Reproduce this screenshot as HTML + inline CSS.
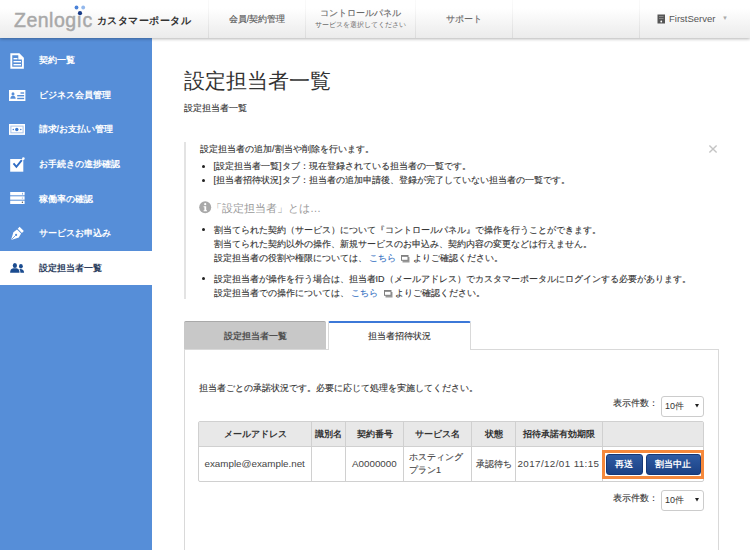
<!DOCTYPE html>
<html><head><meta charset="utf-8">
<style>
*{box-sizing:border-box}
html,body{margin:0;padding:0}
body{width:750px;height:550px;overflow:hidden;position:relative;background:#fff;font-family:"Liberation Sans",sans-serif;color:#333}
.a{position:absolute;white-space:nowrap}
.t[style*="bold"]{-webkit-text-stroke-width:0}
.t{position:absolute;white-space:nowrap;font-size:9px;line-height:14px;-webkit-text-stroke-width:0.12px}
#hdr{position:absolute;left:0;top:0;width:750px;height:38px;background:linear-gradient(#fff 0,#fff 22%,#ebebeb 100%);box-shadow:0 1px 3px rgba(0,0,0,.3);z-index:3}
.sep{position:absolute;top:0;width:1px;height:38px;background:linear-gradient(rgba(0,0,0,.02),rgba(0,0,0,.07))}
#side{position:absolute;left:0;top:38px;width:152px;height:512px;background:#568ed8;z-index:1}
.mi{position:absolute;left:0;width:152px;height:34.7px}
.mi .tx{position:absolute;left:38.6px;top:10.35px;line-height:14px;font-size:9px;font-weight:bold;color:#fff;white-space:nowrap}
.mi svg{position:absolute}
.act{background:#fff}
.act .tx{color:#2d3e5e}
</style></head><body>

<div id="hdr">
  <div class="a" style="left:14px;top:6.8px;font-size:19.5px;line-height:26px;color:#a8a8a8;letter-spacing:0.5px;-webkit-text-stroke:0.45px #a8a8a8">Zenlogıc</div>
  <svg class="a" style="left:0;top:0" width="100" height="38">
    <circle cx="76.5" cy="7.5" r="1.9" fill="#4a82d8"/>
    <circle cx="83.2" cy="7.5" r="1.9" fill="#93b8ec"/>
    <circle cx="80" cy="13.2" r="2.1" fill="#173a86"/>
  </svg>
  <div class="a" style="left:97px;top:12.7px;font-size:10px;letter-spacing:0.45px;line-height:15px;font-weight:bold;color:#333">カスタマーポータル</div>

  <div class="sep" style="left:208px"></div>
  <div class="sep" style="left:305px"></div>
  <div class="sep" style="left:415px"></div>
  <div class="sep" style="left:512px"></div>
  <div class="sep" style="left:639px"></div>

  <div class="t" style="left:209px;width:96px;text-align:center;top:11.5px;color:#555">会員/契約管理</div>
  <div class="t" style="left:306px;width:109px;text-align:center;top:6px;color:#666">コントロールパネル</div>
  <div class="a" style="left:306px;width:109px;text-align:center;top:20px;font-size:7.15px;line-height:10px;color:#666">サービスを選択してください</div>
  <div class="t" style="left:416px;width:96px;text-align:center;top:11.5px;color:#666">サポート</div>

  <svg class="a" style="left:657px;top:14px" width="9" height="10" viewBox="0 0 9 10">
    <rect x="0.5" y="0.5" width="7.5" height="9" fill="#555"/>
    <rect x="2" y="2" width="4.5" height="1" fill="#888"/>
    <rect x="2" y="4" width="4.5" height="1" fill="#888"/>
    <circle cx="4.25" cy="7.5" r="0.9" fill="#fff"/>
  </svg>
  <div class="a" style="left:669px;top:12px;font-size:9.5px;line-height:14px;color:#555">FirstServer</div>
  <div class="a" style="left:722px;top:13px;font-size:6px;line-height:10px;color:#aaa">▼</div>
</div>

<div id="side">
  <div class="mi" style="top:4.60px">
    <svg style="left:10px;top:10.40px" width="15" height="16" viewBox="0 0 15 16">
      <path d="M1.3 1.3 H9 L12.9 5.2 V14.7 H1.3 Z" fill="none" stroke="#fff" stroke-width="1.9"/>
      <path d="M8.3 0.4 L13.8 5.9 L13.8 6.5 L8.3 6.5 Z" fill="#fff"/>
      <rect x="3.5" y="5" width="4" height="1.4" fill="#fff"/>
      <rect x="3.5" y="8" width="7.5" height="1.4" fill="#fff"/>
      <rect x="3.5" y="11" width="7.5" height="1.4" fill="#fff"/>
    </svg>
    <div class="tx">契約一覧</div>
  </div>
  <div class="mi" style="top:39.30px">
    <svg style="left:8.8px;top:12.70px" width="17" height="12" viewBox="0 0 17 12">
      <rect x="0" y="0" width="16.4" height="11" fill="#fff"/>
      <ellipse cx="4" cy="3.9" rx="1.5" ry="1.7" fill="#568ed8"/>
      <path d="M1.3 8.8 Q1.5 5.8 4 5.8 Q6.5 5.8 6.7 8.8 Z" fill="#568ed8"/>
      <rect x="11.5" y="2.3" width="3.6" height="1.4" fill="#568ed8"/>
      <rect x="8.2" y="5" width="6.9" height="1.4" fill="#568ed8"/>
      <rect x="8.2" y="7.8" width="6.9" height="1.4" fill="#568ed8"/>
    </svg>
    <div class="tx">ビジネス会員管理</div>
  </div>
  <div class="mi" style="top:74.00px">
    <svg style="left:9px;top:12.00px" width="17" height="12" viewBox="0 0 17 12">
      <rect x="0" y="0" width="16" height="10.9" fill="#fff"/>
      <rect x="1.4" y="1.6" width="13.2" height="7.7" fill="#a9c4ec"/>
      <rect x="2.4" y="2.6" width="11.2" height="5.7" fill="#fff"/>
      <circle cx="7.8" cy="5.5" r="1.7" fill="#3f7bd0"/>
      <circle cx="4.3" cy="5.5" r="0.7" fill="#3f7bd0"/>
      <circle cx="11.8" cy="5.5" r="0.7" fill="#3f7bd0"/>
    </svg>
    <div class="tx">請求/お支払い管理</div>
  </div>
  <div class="mi" style="top:108.70px">
    <svg style="left:10px;top:10.30px" width="16" height="16" viewBox="0 0 16 16">
      <rect x="0.2" y="2" width="13.1" height="12.7" fill="#fff"/>
      <path d="M3.5 6.4 L6.4 9.8 L11.8 3.2" fill="none" stroke="#2f6cc4" stroke-width="1.9"/>
      <circle cx="13.4" cy="1.6" r="1.3" fill="#fff"/>
    </svg>
    <div class="tx">お手続きの進捗確認</div>
  </div>
  <div class="mi" style="top:143.40px">
    <svg style="left:10px;top:10.60px" width="15" height="13" viewBox="0 0 15 13">
      <rect x="0.2" y="0" width="14.4" height="3.3" fill="#fff"/>
      <rect x="0.2" y="4.3" width="14.4" height="3.4" fill="#fff"/>
      <rect x="0.2" y="8.7" width="14.4" height="3.3" fill="#fff"/>
      <rect x="12" y="0.8" width="0.9" height="1.8" fill="#7fa6e0"/>
      <circle cx="12.4" cy="6" r="0.6" fill="#7fa6e0"/>
      <circle cx="12.4" cy="10.3" r="0.7" fill="#555"/>
    </svg>
    <div class="tx">稼働率の確認</div>
  </div>
  <div class="mi" style="top:178.10px">
    <svg style="left:10px;top:9.90px" width="15" height="15" viewBox="0 0 15 15">
      <path d="M9.6 0.8 L13.8 5 L11.9 6.9 L7.7 2.7 Z" fill="#fff"/>
      <path d="M7 3.5 L11.1 7.6 L8.8 11.6 L1 14 L3.4 6.2 Z" fill="#fff"/>
      <path d="M1.3 13.7 L5.5 9.5" stroke="#568ed8" stroke-width="0.8"/>
      <circle cx="6.1" cy="8.9" r="1.1" fill="#568ed8"/>
    </svg>
    <div class="tx">サービスお申込み</div>
  </div>
  <div class="mi act" style="top:212.80px">
    <svg style="left:9px;top:10.20px" width="17" height="13" viewBox="0 0 17 13">
      <ellipse cx="5.9" cy="4.4" rx="2.1" ry="2.5" fill="#1a4b8f"/>
      <path d="M1.1 11.7 Q1.1 7.6 4.3 7.2 L7.5 7.2 Q10.5 7.6 10.5 11.7 Z" fill="#1a4b8f"/>
      <ellipse cx="11.9" cy="5.3" rx="1.9" ry="2.2" fill="#1a4b8f"/>
      <path d="M11.2 8 Q14.9 8 15.1 11.7 L11.4 11.7 Q11.4 9.3 10.4 8.3 Z" fill="#1a4b8f"/>
    </svg>
    <div class="tx">設定担当者一覧</div>
  </div>
</div>

<!-- content -->
<div class="a" style="left:184px;top:67px;font-size:20.8px;line-height:27px;color:#333">設定担当者一覧</div>
<div class="t" style="left:184px;top:100.5px;color:#333">設定担当者一覧</div>

<div class="a" style="left:184px;top:142px;width:2px;height:157px;background:#e3e3e3"></div>
<svg class="a" style="left:708px;top:144px" width="10" height="10" viewBox="0 0 10 10"><path d="M1.4 1.4 L8.6 8.4 M8.6 1.4 L1.4 8.4" stroke="#c4c4c4" stroke-width="1.4"/></svg>

<div class="t" style="left:200px;top:142px;color:#333">設定担当者の追加/割当や削除を行います。</div>
<div class="a" style="left:201.8px;top:164.9px;width:3px;height:3px;border-radius:50%;background:#222"></div>
<div class="t" style="left:213.5px;top:159px;color:#333">[設定担当者一覧]タブ：現在登録されている担当者の一覧です。</div>
<div class="a" style="left:201.8px;top:178.5px;width:3px;height:3px;border-radius:50%;background:#222"></div>
<div class="t" style="left:213.5px;top:173px;color:#333">[担当者招待状況]タブ：担当者の追加申請後、登録が完了していない担当者の一覧です。</div>

<svg class="a" style="left:199px;top:201px" width="13" height="13" viewBox="0 0 13 13">
  <circle cx="6.2" cy="6.2" r="6" fill="#a8a8a8"/>
  <circle cx="6.2" cy="3.2" r="1.1" fill="#fff"/>
  <path d="M4.6 5.3 H7.2 V9.3 H8 V10.3 H4.6 V9.3 H5.4 V6.3 H4.6 Z" fill="#fff"/>
</svg>
<div class="a" style="left:211px;top:200px;font-size:11px;line-height:16px;color:#9a9a9a">「設定担当者」とは…</div>

<div class="a" style="left:202px;top:228.1px;width:3px;height:3px;border-radius:50%;background:#222"></div>
<div class="t" style="left:213.5px;top:223px;color:#333">割当てられた契約（サービス）について『コントロールパネル』で操作を行うことができます。</div>
<div class="t" style="left:213.5px;top:237px;color:#333">割当てられた契約以外の操作、新規サービスのお申込み、契約内容の変更などは行えません。</div>
<div class="t" style="left:213.5px;top:251px;color:#333">設定担当者の役割や権限については、 <span style="color:#3a74c4">こちら</span></div>
<div class="t" style="left:412.5px;top:251px;color:#333">よりご確認ください。</div>
<svg class="a" style="left:401px;top:255px" width="9" height="8" viewBox="0 0 9 8"><rect x="1.5" y="2" width="7" height="5.5" fill="#999"/><rect x="0.5" y="0.5" width="6.5" height="4.8" fill="#fff" stroke="#808080" stroke-width="1"/><rect x="0.5" y="0.5" width="6.5" height="1.3" fill="#808080"/></svg>

<div class="a" style="left:202px;top:276.6px;width:3px;height:3px;border-radius:50%;background:#222"></div>
<div class="t" style="left:213.5px;top:272px;color:#333">設定担当者が操作を行う場合は、担当者ID（メールアドレス）でカスタマーポータルにログインする必要があります。</div>
<div class="t" style="left:213.5px;top:286px;color:#333">設定担当者での操作については、 <span style="color:#3a74c4">こちら</span></div>
<div class="t" style="left:394.5px;top:286px;color:#333">よりご確認ください。</div>
<svg class="a" style="left:383.5px;top:290px" width="9" height="8" viewBox="0 0 9 8"><rect x="1.5" y="2" width="7" height="5.5" fill="#999"/><rect x="0.5" y="0.5" width="6.5" height="4.8" fill="#fff" stroke="#808080" stroke-width="1"/><rect x="0.5" y="0.5" width="6.5" height="1.3" fill="#808080"/></svg>

<!-- tabs -->
<div class="a" style="left:184px;top:321px;width:142px;height:29px;background:#c8c8c8;border-top:1.5px solid #a9a9a9;border-radius:2px 2px 0 0"></div>
<div class="t" style="left:184px;width:142px;text-align:center;top:329px;color:#505050;font-weight:bold;-webkit-text-stroke-width:0">設定担当者一覧</div>
<div class="a" style="left:328px;top:321px;width:143px;height:29px;background:#fff;border:1px solid #d9d9d9;border-top:2px solid #3c78d8;border-bottom:none;border-radius:2px 2px 0 0;z-index:2"></div>
<div class="t" style="left:328px;width:143px;text-align:center;top:329px;color:#333;z-index:3">担当者招待状況</div>
<!-- panel -->
<div class="a" style="left:184px;top:349px;width:535px;height:220px;border:1px solid #d9d9d9;background:#fff"></div>

<div class="t" style="left:198.5px;top:381px;color:#333">担当者ごとの承諾状況です。必要に応じて処理を実施してください。</div>

<div class="t" style="left:612.5px;top:396px;color:#333">表示件数：</div>
<div class="a" style="left:661px;top:395.5px;width:42.5px;height:21.5px;border:1px solid #ccc;border-radius:3px;background:#fff"></div>
<div class="a" style="left:665px;top:398.5px;font-size:9px;line-height:14px;color:#333">10件</div>
<svg class="a" style="left:695px;top:404px" width="4" height="4" viewBox="0 0 4 4"><path d="M0 0 H4 L2 3.6 Z" fill="#222"/></svg>

<!-- table -->
<div class="a" style="left:198px;top:421px;width:506px;height:61px;border:1px solid #d0d0d0;border-radius:2px;background:#fff"></div>
<div class="a" style="left:199px;top:422px;width:504px;height:24px;background:#e8e8e8"></div>
<div class="a" style="left:199px;top:446px;width:504px;height:1px;background:#d0d0d0"></div>
<div class="a" style="left:311px;top:422px;width:1px;height:59px;background:#d0d0d0"></div>
<div class="a" style="left:345px;top:422px;width:1px;height:59px;background:#d0d0d0"></div>
<div class="a" style="left:403px;top:422px;width:1px;height:59px;background:#d0d0d0"></div>
<div class="a" style="left:471px;top:422px;width:1px;height:59px;background:#d0d0d0"></div>
<div class="a" style="left:515px;top:422px;width:1px;height:59px;background:#d0d0d0"></div>
<div class="a" style="left:602px;top:422px;width:1px;height:59px;background:#d0d0d0"></div>

<div class="t" style="left:199px;width:112px;text-align:center;top:427px;font-weight:bold;color:#333">メールアドレス</div>
<div class="t" style="left:312px;width:33px;text-align:center;top:427px;font-weight:bold;color:#333">識別名</div>
<div class="t" style="left:346px;width:57px;text-align:center;top:427px;font-weight:bold;color:#333">契約番号</div>
<div class="t" style="left:404px;width:67px;text-align:center;top:427px;font-weight:bold;color:#333">サービス名</div>
<div class="t" style="left:472px;width:43px;text-align:center;top:427px;font-weight:bold;color:#333">状態</div>
<div class="t" style="left:516px;width:86px;text-align:center;top:427px;font-weight:bold;color:#333">招待承諾有効期限</div>

<div class="a" style="left:204.5px;top:457px;font-size:9.8px;line-height:14px;color:#444">example@example.net</div>
<div class="a" style="left:352px;top:457px;font-size:9.8px;line-height:14px;color:#444">A0000000</div>
<div class="t" style="left:409px;top:449.5px;color:#444">ホスティング</div>
<div class="t" style="left:409px;top:462.5px;color:#444">プラン1</div>
<div class="t" style="left:475.5px;top:457px;color:#444">承認待ち</div>
<div class="a" style="left:517.5px;top:457px;font-size:9.8px;line-height:14px;letter-spacing:0.4px;color:#444">2017/12/01 11:15</div>

<div class="a" style="left:602px;top:450px;width:102px;height:28.5px;border:3px solid #f5893c"></div>
<div class="a" style="left:606px;top:453.8px;width:36.5px;height:21px;border-radius:3px;background:linear-gradient(#2e5ba3,#1b4184);border:1px solid #163876"></div>
<div class="t" style="left:606px;width:36.5px;text-align:center;top:457px;color:#fff;font-weight:bold;-webkit-text-stroke-width:0">再送</div>
<div class="a" style="left:646px;top:453.8px;width:54.5px;height:21px;border-radius:3px;background:linear-gradient(#2e5ba3,#1b4184);border:1px solid #163876"></div>
<div class="t" style="left:646px;width:54.5px;text-align:center;top:457px;color:#fff;font-weight:bold;-webkit-text-stroke-width:0">割当中止</div>

<div class="t" style="left:612.5px;top:490.5px;color:#333">表示件数：</div>
<div class="a" style="left:661px;top:489.5px;width:42.5px;height:21.5px;border:1px solid #ccc;border-radius:3px;background:#fff"></div>
<div class="a" style="left:665px;top:492.5px;font-size:9px;line-height:14px;color:#333">10件</div>
<svg class="a" style="left:695px;top:497.8px" width="4" height="4" viewBox="0 0 4 4"><path d="M0 0 H4 L2 3.6 Z" fill="#222"/></svg>

</body></html>
